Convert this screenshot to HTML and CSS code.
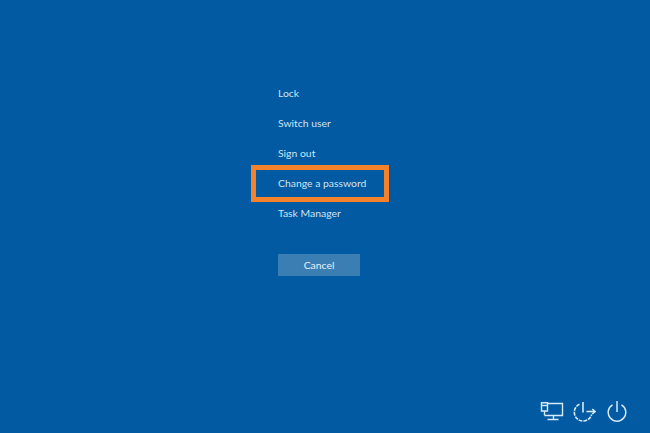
FILE: index.html
```html
<!DOCTYPE html>
<html lang="en">
<head>
<meta charset="utf-8">
<title>Security options</title>
<link rel="stylesheet" href="styles.css">
</head>
<body>
<main class="screen">
  <nav class="menu">
    <a class="item">Lock</a>
    <a class="item">Switch user</a>
    <a class="item">Sign out</a>
    <a class="item highlighted">Change a password</a>
    <a class="item">Task Manager</a>
    <button class="cancel">Cancel</button>
  </nav>
  <div class="tray">
    <svg class="icon" width="24" height="22" viewBox="0 0 24 22" fill="none" stroke="#d6eaf8" stroke-width="1.4">
      <path d="M7 3.5H22.5V15.5H4.5"/>
      <path d="M1.5 2.7H7.5V11H1.5Z"/>
      <path d="M2 5.5H7"/>
      <path d="M4.5 11V15.5"/>
      <path d="M13.5 15.5V19.5M7.5 19.5H18.5"/>
    </svg>
    <svg class="icon" width="24" height="22" viewBox="0 0 24 22" fill="none" stroke="#d6eaf8" stroke-width="1.6">
      <path d="M7.5 4.2A8.8 8.8 0 1 0 19.6 14.5" stroke-dasharray="3.8 1"/>
      <path d="M11 2V12.5"/>
      <path d="M14.5 11.5H23"/>
      <path d="M20.3 9L23 11.5L20.3 14"/>
    </svg>
    <svg class="icon" width="23" height="22" viewBox="0 0 23 22" fill="none" stroke="#d6eaf8" stroke-width="1.5">
      <path d="M13 1V12"/>
      <path d="M8.5 4.8A8.8 8.8 0 1 0 17.5 4.8"/>
    </svg>
  </div>
</main>
</body>
</html>
```
FILE: styles.css
```css
html, body {
  margin: 0;
  padding: 0;
}
.screen {
  position: relative;
  width: 650px;
  height: 433px;
  overflow: hidden;
  background: #015aa2;
  font-family: Lato, "Open Sans", "Liberation Sans", sans-serif;
  color: #cfe3f2;
  font-size: 10.4px;
}
.menu {
  display: flex;
  flex-direction: column;
  align-items: flex-start;
  padding: 78px 0 0 278px;
}
.item {
  display: block;
  height: 30px;
  line-height: 30px;
  position: relative;
}
.highlighted::after {
  content: "";
  position: absolute;
  left: -27px;
  top: -3px;
  width: 128px;
  height: 27px;
  border: 5px solid #f5822a;
}
.cancel {
  margin-top: 26px;
  width: 82px;
  height: 22px;
  border: 0;
  padding: 0;
  background: #3b7eb4;
  color: #e6f0f8;
  font: inherit;
}
.tray {
  position: absolute;
  right: 23px;
  top: 400px;
  display: flex;
  gap: 8px;
}
.icon {
  display: block;
}
```
